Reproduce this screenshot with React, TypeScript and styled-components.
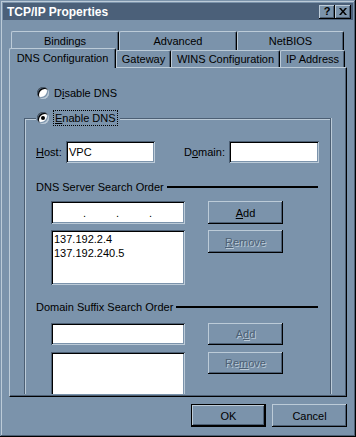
import React from 'react';
import styled, { createGlobalStyle, css } from 'styled-components';

const face = '#7b93ab';
const light = '#bccbd8';
const shadow = '#4c5f74';
const black = '#000';
const caption = '#4b6079';

const GlobalStyle = createGlobalStyle`
  html, body {
    margin: 0;
    padding: 0;
    background: ${face};
  }
  body {
    font-family: "Liberation Sans", Arial, sans-serif;
    font-size: 11px;
    color: #000;
  }
  * {
    box-sizing: border-box;
  }
`;

const raised = css`
  background: ${face};
  box-shadow: inset -1px -1px 0 ${black}, inset 1px 1px 0 ${light}, inset -2px -2px 0 ${shadow};
`;

const Window = styled.div`
  width: 356px;
  height: 437px;
  padding: 3px;
  background: ${face};
  box-shadow: inset -1px -1px 0 ${black}, inset 1px 1px 0 ${face}, inset -2px -2px 0 ${shadow},
    inset 2px 2px 0 ${light};
  display: flex;
  flex-direction: column;
`;

const TitleBar = styled.div`
  height: 17px;
  background: ${caption};
  color: #fff;
  display: flex;
  align-items: center;
  padding: 0 2px 0 4px;
  font-size: 12px;
  font-weight: bold;
`;

const TitleText = styled.span`
  flex: 1;
`;

const CaptionButton = styled.div`
  ${raised};
  width: 16px;
  height: 14px;
  color: #000;
  display: flex;
  align-items: center;
  justify-content: center;
  font-size: 11px;
  font-weight: bold;
  line-height: 1;
  padding-bottom: 1px;
`;

const TabRows = styled.div`
  margin: 11px 6px 0;
  padding-left: 2px;
  display: flex;
  flex-direction: column;
`;

const TabRow = styled.div<{ $h: number }>`
  display: flex;
  align-items: flex-start;
  height: ${(p) => p.$h}px;
`;

const Tab = styled.div<{ $w: number; $h: number; $active?: boolean }>`
  width: ${(p) => p.$w}px;
  height: ${(p) => p.$h}px;
  flex: none;
  display: flex;
  align-items: center;
  justify-content: center;
  background: ${face};
  border-top: 1px solid ${light};
  border-left: 1px solid ${light};
  border-right: 1px solid ${black};
  border-radius: 2px 2px 0 0;
  box-shadow: inset -1px 0 0 ${shadow};
  ${(p) =>
    p.$active &&
    css`
      position: relative;
      z-index: 1;
      margin: -2px 0 0 -2px;
      height: ${p.$h + 3}px;
      padding-bottom: 2px;
    `}
`;

const Panel = styled.div`
  height: 330px;
  margin: 0 6px;
  background: ${face};
  border-top: 1px solid ${light};
  border-left: 1px solid ${light};
  border-right: 1px solid ${black};
  border-bottom: 1px solid ${black};
  box-shadow: inset -1px -1px 0 ${shadow};
  padding: 17px 13px 0 14px;
`;

const RadioRow = styled.div`
  height: 16px;
  margin-left: 13px;
  display: flex;
  align-items: center;
  gap: 5px;
`;

const RadioMark = styled.span<{ $checked?: boolean }>`
  width: 12px;
  height: 12px;
  flex: none;
  border-radius: 50%;
  background: #fff;
  box-shadow: inset 1px 1px 0 ${shadow}, inset -1px -1px 0 ${light}, inset 2px 2px 0 ${black},
    inset -2px -2px 0 ${face};
  display: flex;
  align-items: center;
  justify-content: center;
  &::after {
    content: '';
    width: 4px;
    height: 4px;
    border-radius: 50%;
    background: ${(p) => (p.$checked ? black : 'transparent')};
  }
`;

const Group = styled.fieldset`
  margin: 9px 0 0;
  min-width: 0;
  padding: 0 12px 0 11px;
  border: 1px solid ${shadow};
  border-bottom: none;
  box-shadow: inset 1px 1px 0 ${light}, 1px 0 0 ${light};
  width: 307px;
`;

const Legend = styled.legend`
  height: 16px;
  padding: 0 2px 0 1px;
  background: ${face};
  display: flex;
  align-items: center;
  gap: 4px;
`;

const Focus = styled.span`
  height: 16px;
  padding: 0 1px;
  border: 1px dotted ${black};
  display: flex;
  align-items: center;
`;

const FieldRow = styled.div<{ $top: number; $indent?: number }>`
  display: flex;
  align-items: center;
  margin-top: ${(p) => p.$top}px;
  padding-left: ${(p) => p.$indent ?? 0}px;
`;

const ControlRow = styled.div<{ $top: number }>`
  display: flex;
  align-items: flex-start;
  gap: 23px;
  margin-top: ${(p) => p.$top}px;
  padding-left: 15px;
`;

const Label = styled.span<{ $w: number; $gap?: number }>`
  width: ${(p) => p.$w}px;
  margin-left: ${(p) => p.$gap ?? 0}px;
  flex: none;
`;

const SectionHead = styled.div<{ $top: number }>`
  height: 14px;
  margin-top: ${(p) => p.$top}px;
  display: flex;
  align-items: center;
`;

const Rule = styled.span`
  flex: 1;
  height: 2px;
  margin-left: 3px;
  background: ${black};
`;

const Sunken = styled.div<{ $w: number; $h: number; $open?: boolean }>`
  width: ${(p) => p.$w}px;
  height: ${(p) => p.$h}px;
  flex: none;
  background: #fff;
  padding: 2px 3px;
  line-height: 14px;
  box-shadow: ${(p) =>
    p.$open
      ? `inset 1px 1px 0 ${shadow}, inset -1px 0 0 ${light}, inset 2px 2px 0 ${black}, inset -2px 0 0 ${face}`
      : `inset 1px 1px 0 ${shadow}, inset -1px -1px 0 ${light}, inset 2px 2px 0 ${black}, inset -2px -2px 0 ${face}`};
`;

const FieldText = styled.span<{ $h: number }>`
  display: block;
  line-height: ${(p) => p.$h - 4}px;
`;

const IpDots = styled.div`
  display: flex;
  padding-left: 29px;
  height: 100%;
  align-items: center;
  padding-top: 1px;
`;

const Dot = styled.span`
  width: 33px;
  flex: none;
`;

const Button = styled.button<{ $w: number; $h: number; $default?: boolean }>`
  ${raised};
  width: ${(p) => p.$w}px;
  height: ${(p) => p.$h}px;
  flex: none;
  border: none;
  padding: 0;
  margin: 0;
  font-family: inherit;
  font-size: 11px;
  color: #000;
  ${(p) =>
    p.$default &&
    css`
      border: 1px solid ${black};
    `}
  &:disabled {
    color: ${shadow};
    text-shadow: 1px 1px 0 ${light};
  }
`;

const ButtonRow = styled.div`
  margin-top: 7px;
  padding-right: 6px;
  display: flex;
  justify-content: flex-end;
  gap: 6px;
`;

export default function App() {
  return (
    <>
      <GlobalStyle />
      <Window>
        <TitleBar>
          <TitleText>TCP/IP Properties</TitleText>
          <CaptionButton>?</CaptionButton>
          <CaptionButton>
            <svg width="8" height="7" viewBox="0 0 8 7">
              <path d="M0 0h2l2 2.5L6 0h2L5 3.5 8 7H6L4 4.5 2 7H0l3-3.5z" fill="#000" />
            </svg>
          </CaptionButton>
        </TitleBar>

        <TabRows>
          <TabRow $h={19}>
            <Tab $w={108} $h={19}>Bindings</Tab>
            <Tab $w={118} $h={19}>Advanced</Tab>
            <Tab $w={107} $h={19}>NetBIOS</Tab>
          </TabRow>
          <TabRow $h={17}>
            <Tab $w={107} $h={17} $active>
              DNS Configuration
            </Tab>
            <Tab $w={55} $h={17}>Gateway</Tab>
            <Tab $w={109} $h={17}>WINS Configuration</Tab>
            <Tab $w={65} $h={17}>IP Address</Tab>
          </TabRow>
        </TabRows>

        <Panel>
          <RadioRow>
            <RadioMark />
            <span>
              D<u>i</u>sable DNS
            </span>
          </RadioRow>

          <Group>
            <Legend>
              <RadioMark $checked />
              <Focus>
                <u>E</u>nable DNS
              </Focus>
            </Legend>

            <FieldRow $top={15}>
              <Label $w={30}>
                <u>H</u>ost:
              </Label>
              <Sunken $w={89} $h={22}>
                <FieldText $h={22}>VPC</FieldText>
              </Sunken>
              <Label $w={45} $gap={29}>
                D<u>o</u>main:
              </Label>
              <Sunken $w={90} $h={22} />
            </FieldRow>

            <SectionHead $top={17}>
              <span>DNS Server Search Order</span>
              <Rule />
            </SectionHead>

            <ControlRow $top={7}>
              <Sunken $w={134} $h={23}>
                <IpDots>
                  <Dot>.</Dot>
                  <Dot>.</Dot>
                  <Dot>.</Dot>
                </IpDots>
              </Sunken>
              <Button $w={75} $h={23}>
                <u>A</u>dd
              </Button>
            </ControlRow>

            <ControlRow $top={6}>
              <Sunken $w={134} $h={55}>
                <div>137.192.2.4</div>
                <div>137.192.240.5</div>
              </Sunken>
              <Button $w={75} $h={23} disabled>
                <u>R</u>emove
              </Button>
            </ControlRow>

            <SectionHead $top={15}>
              <span>Domain Suffix Search Order</span>
              <Rule />
            </SectionHead>

            <ControlRow $top={9}>
              <Sunken $w={134} $h={22} />
              <Button $w={75} $h={22} disabled>
                A<u>d</u>d
              </Button>
            </ControlRow>

            <ControlRow $top={7}>
              <Sunken $w={134} $h={42} $open />
              <Button $w={75} $h={22} disabled>
                Re<u>m</u>ove
              </Button>
            </ControlRow>
          </Group>
        </Panel>

        <ButtonRow>
          <Button $w={75} $h={23} $default>
            OK
          </Button>
          <Button $w={75} $h={23}>
            Cancel
          </Button>
        </ButtonRow>
      </Window>
    </>
  );
}
